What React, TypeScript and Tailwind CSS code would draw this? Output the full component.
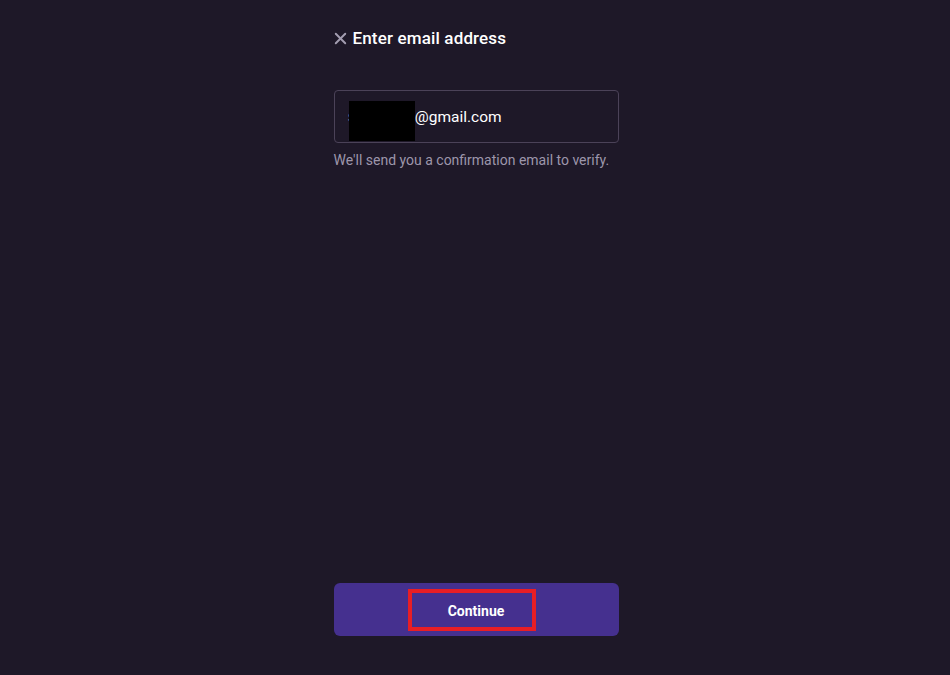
import { X } from "lucide-react";

export default function App() {
    return (
        <div className="h-[675px] w-full bg-[#1e1828] pl-[2px] font-['Roboto',sans-serif] text-white">
            <div className="mx-auto flex h-full w-[285px] flex-col">
                {/* Header */}
                <div className="mt-[27px] flex items-center gap-[3px]">
                    <X className="h-[19px] w-[19px] -ml-[3px] text-[#a39db0]" strokeWidth={2.4} />
                    <h1 className="text-[17px] font-medium leading-[22px] tracking-[0.15px]">Enter email address</h1>
                </div>

                {/* Email input */}
                <div className="mt-[41px] flex h-[53px] items-center rounded-[4px] border border-[#4b4258] pl-[13px]">
                    <span className="text-[16px] leading-none text-[#8f889c]">s</span>
                    <span className="-ml-[7px] mt-[8px] h-[40px] w-[66px] bg-black" />
                    <span className="mt-[2px] text-[15.5px] leading-none">@gmail.com</span>
                </div>
                <p className="mt-[7px] text-[14px] text-[#9d96ab]">We'll send you a confirmation email to verify.</p>

                <div className="flex-1" />

                {/* Continue */}
                <button className="relative mb-[39px] flex h-[53px] w-full items-center justify-center rounded-[6px] bg-[#45308f] pt-[3px] text-[14px] font-bold">
                    Continue
                    <span className="absolute left-[74px] top-[6px] h-[42px] w-[128px] border-4 border-[#e81e25]" />
                </button>
            </div>
        </div>
    );
}
